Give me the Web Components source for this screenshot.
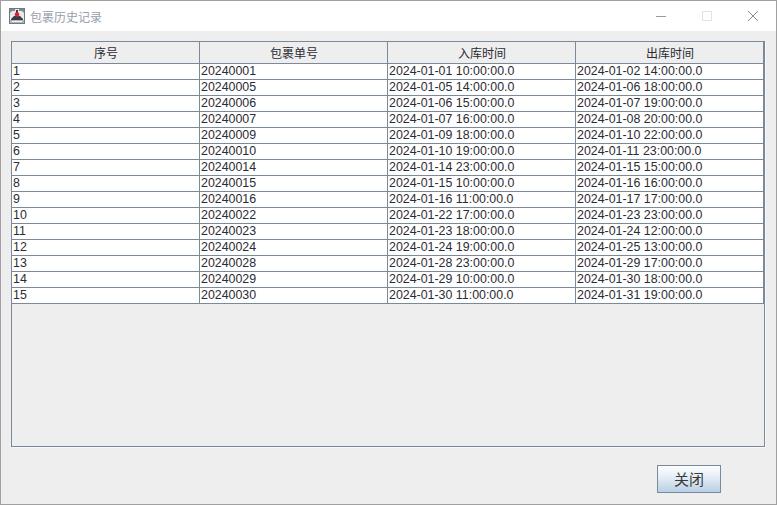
<!DOCTYPE html>
<html>
<head>
<meta charset="utf-8">
<style>
  html, body { margin: 0; padding: 0; }
  body { width: 777px; height: 505px; overflow: hidden; background: #eeeeee; }
</style>
</head>
<body>
<history-window title-text="包裹历史记录"></history-window>
<script>
const ROWS = [
  ["1", "20240001", "2024-01-01 10:00:00.0", "2024-01-02 14:00:00.0"],
  ["2", "20240005", "2024-01-05 14:00:00.0", "2024-01-06 18:00:00.0"],
  ["3", "20240006", "2024-01-06 15:00:00.0", "2024-01-07 19:00:00.0"],
  ["4", "20240007", "2024-01-07 16:00:00.0", "2024-01-08 20:00:00.0"],
  ["5", "20240009", "2024-01-09 18:00:00.0", "2024-01-10 22:00:00.0"],
  ["6", "20240010", "2024-01-10 19:00:00.0", "2024-01-11 23:00:00.0"],
  ["7", "20240014", "2024-01-14 23:00:00.0", "2024-01-15 15:00:00.0"],
  ["8", "20240015", "2024-01-15 10:00:00.0", "2024-01-16 16:00:00.0"],
  ["9", "20240016", "2024-01-16 11:00:00.0", "2024-01-17 17:00:00.0"],
  ["10", "20240022", "2024-01-22 17:00:00.0", "2024-01-23 23:00:00.0"],
  ["11", "20240023", "2024-01-23 18:00:00.0", "2024-01-24 12:00:00.0"],
  ["12", "20240024", "2024-01-24 19:00:00.0", "2024-01-25 13:00:00.0"],
  ["13", "20240028", "2024-01-28 23:00:00.0", "2024-01-29 17:00:00.0"],
  ["14", "20240029", "2024-01-29 10:00:00.0", "2024-01-30 18:00:00.0"],
  ["15", "20240030", "2024-01-30 11:00:00.0", "2024-01-31 19:00:00.0"]
];
const HEADERS = ["序号", "包裹单号", "入库时间", "出库时间"];

class TitleBar extends HTMLElement {
  constructor() {
    super();
    this.attachShadow({ mode: "open" });
  }

  connectedCallback() {
    this.shadowRoot.innerHTML = /* html */`
    <style>
      :host {
        display: flex;
        align-items: center;
        height: 30px;
        background: #fff;
        font: 12px "Noto Sans CJK SC", sans-serif;
        color: #97a0aa;
      }
      .icon { width: 16px; height: 16px; margin: 0 5px 0 8px; flex: none; }
      .label { flex: 1; font-size: 12px; }
      .btn { width: 46px; height: 30px; display: flex; align-items: center; justify-content: center; }
      .btn svg { width: 10px; height: 10px; }
    </style>
    <svg class="icon" viewBox="0 0 16 16">
      <rect x="0.5" y="0.5" width="15" height="15" fill="#e8eaec" stroke="#6f7883"/>
      <path d="M1 1 H6 V3 H3 L1 5 Z M10 1 H15 V5 L13 3 H10 Z" fill="#83898f"/>
      <path d="M7 2 H9 V5 H7 Z M2 11 L5 8 H11 L14 11 V12 H2 Z" fill="#3a3d41"/>
      <path d="M1 12 H15 V15 H1 Z" fill="#aeb7c1"/>
      <path d="M3 13 H13 V14 H3 Z" fill="#f2f2f2"/>
      <circle cx="8" cy="6.5" r="2.3" fill="#e0202a"/>
    </svg>
    <span class="label"><slot></slot></span>
    <div class="btn"><svg viewBox="0 0 10 10"><path d="M0 5.5 H10" stroke="#9a9a9a" fill="none"/></svg></div>
    <div class="btn"><svg viewBox="0 0 10 10"><rect x="0.5" y="0.5" width="9" height="9" stroke="#e3e3e3" fill="none"/></svg></div>
    <div class="btn"><svg viewBox="0 0 10 10"><path d="M0 0 L10 10 M10 0 L0 10" stroke="#8a8a8a" fill="none"/></svg></div>`;
  }
}

class HistoryTable extends HTMLElement {
  constructor() {
    super();
    this.attachShadow({ mode: "open" });
  }

  connectedCallback() {
    const head = HEADERS.map(h => `<div class="th">${h}</div>`).join("");
    const body = ROWS.map(r => `<div class="row">${r.map(c => `<div class="td">${c}</div>`).join("")}</div>`).join("");
    this.shadowRoot.innerHTML = /* html */`
    <style>
      :host {
        display: block;
        height: 404px;
        border: 1px solid #7a8a99;
        box-shadow: 1px 1px 0 #f8f8f8;
        font: 12.4px "Liberation Sans", "Noto Sans CJK SC", sans-serif;
        color: #2b2b33;
      }
      .head, .row { display: grid; grid-template-columns: repeat(4, 188px); }
      .head { height: 22px; background: #eeeeee; border-bottom: 1px solid #7a8a99; box-sizing: border-box; }
      .th { border-right: 1px solid #7a8a99; text-align: center; font-size: 12px; line-height: 24px; padding-left: 1px; overflow: hidden; }
      .row { height: 16px; box-sizing: border-box; background: #fff; border-bottom: 1px solid #7a8a99; }
      .td { border-right: 1px solid #7a8a99; padding-left: 1px; line-height: 15px; white-space: nowrap; overflow: hidden; }
    </style>
    <div class="head">${head}</div>
    ${body}`;
  }
}

class ActionButton extends HTMLElement {
  constructor() {
    super();
    this.attachShadow({ mode: "open" });
  }

  connectedCallback() {
    this.shadowRoot.innerHTML = /* html */`
    <style>
      :host {
        display: block;
        width: 62px;
        height: 26px;
        border: 1px solid #7a8a99;
        background: linear-gradient(#fbfdff 0%, #eaf1f7 35%, #b8cfe5 100%);
        text-align: center;
        font: 15px/25px "Noto Sans CJK SC", sans-serif;
        color: #3a3a3a;
      }
    </style>
    <slot></slot>`;
  }
}

class HistoryWindow extends HTMLElement {
  constructor() {
    super();
    this.attachShadow({ mode: "open" });
  }

  connectedCallback() {
    this.shadowRoot.innerHTML = /* html */`
    <style>
      :host {
        display: block;
        box-sizing: border-box;
        width: 777px;
        height: 505px;
        border: 1px solid #a0a0a0;
        background: #eeeeee;
      }
      .content { padding: 10px 11px 0 10px; }
      .footer { display: flex; justify-content: flex-end; padding: 18px 55px 0 0; }
    </style>
    <title-bar>${this.getAttribute("title-text")}</title-bar>
    <div class="content"><history-table></history-table></div>
    <div class="footer"><action-button>关闭</action-button></div>`;
  }
}

customElements.define("title-bar", TitleBar);
customElements.define("history-table", HistoryTable);
customElements.define("action-button", ActionButton);
customElements.define("history-window", HistoryWindow);
</script>
</body>
</html>
